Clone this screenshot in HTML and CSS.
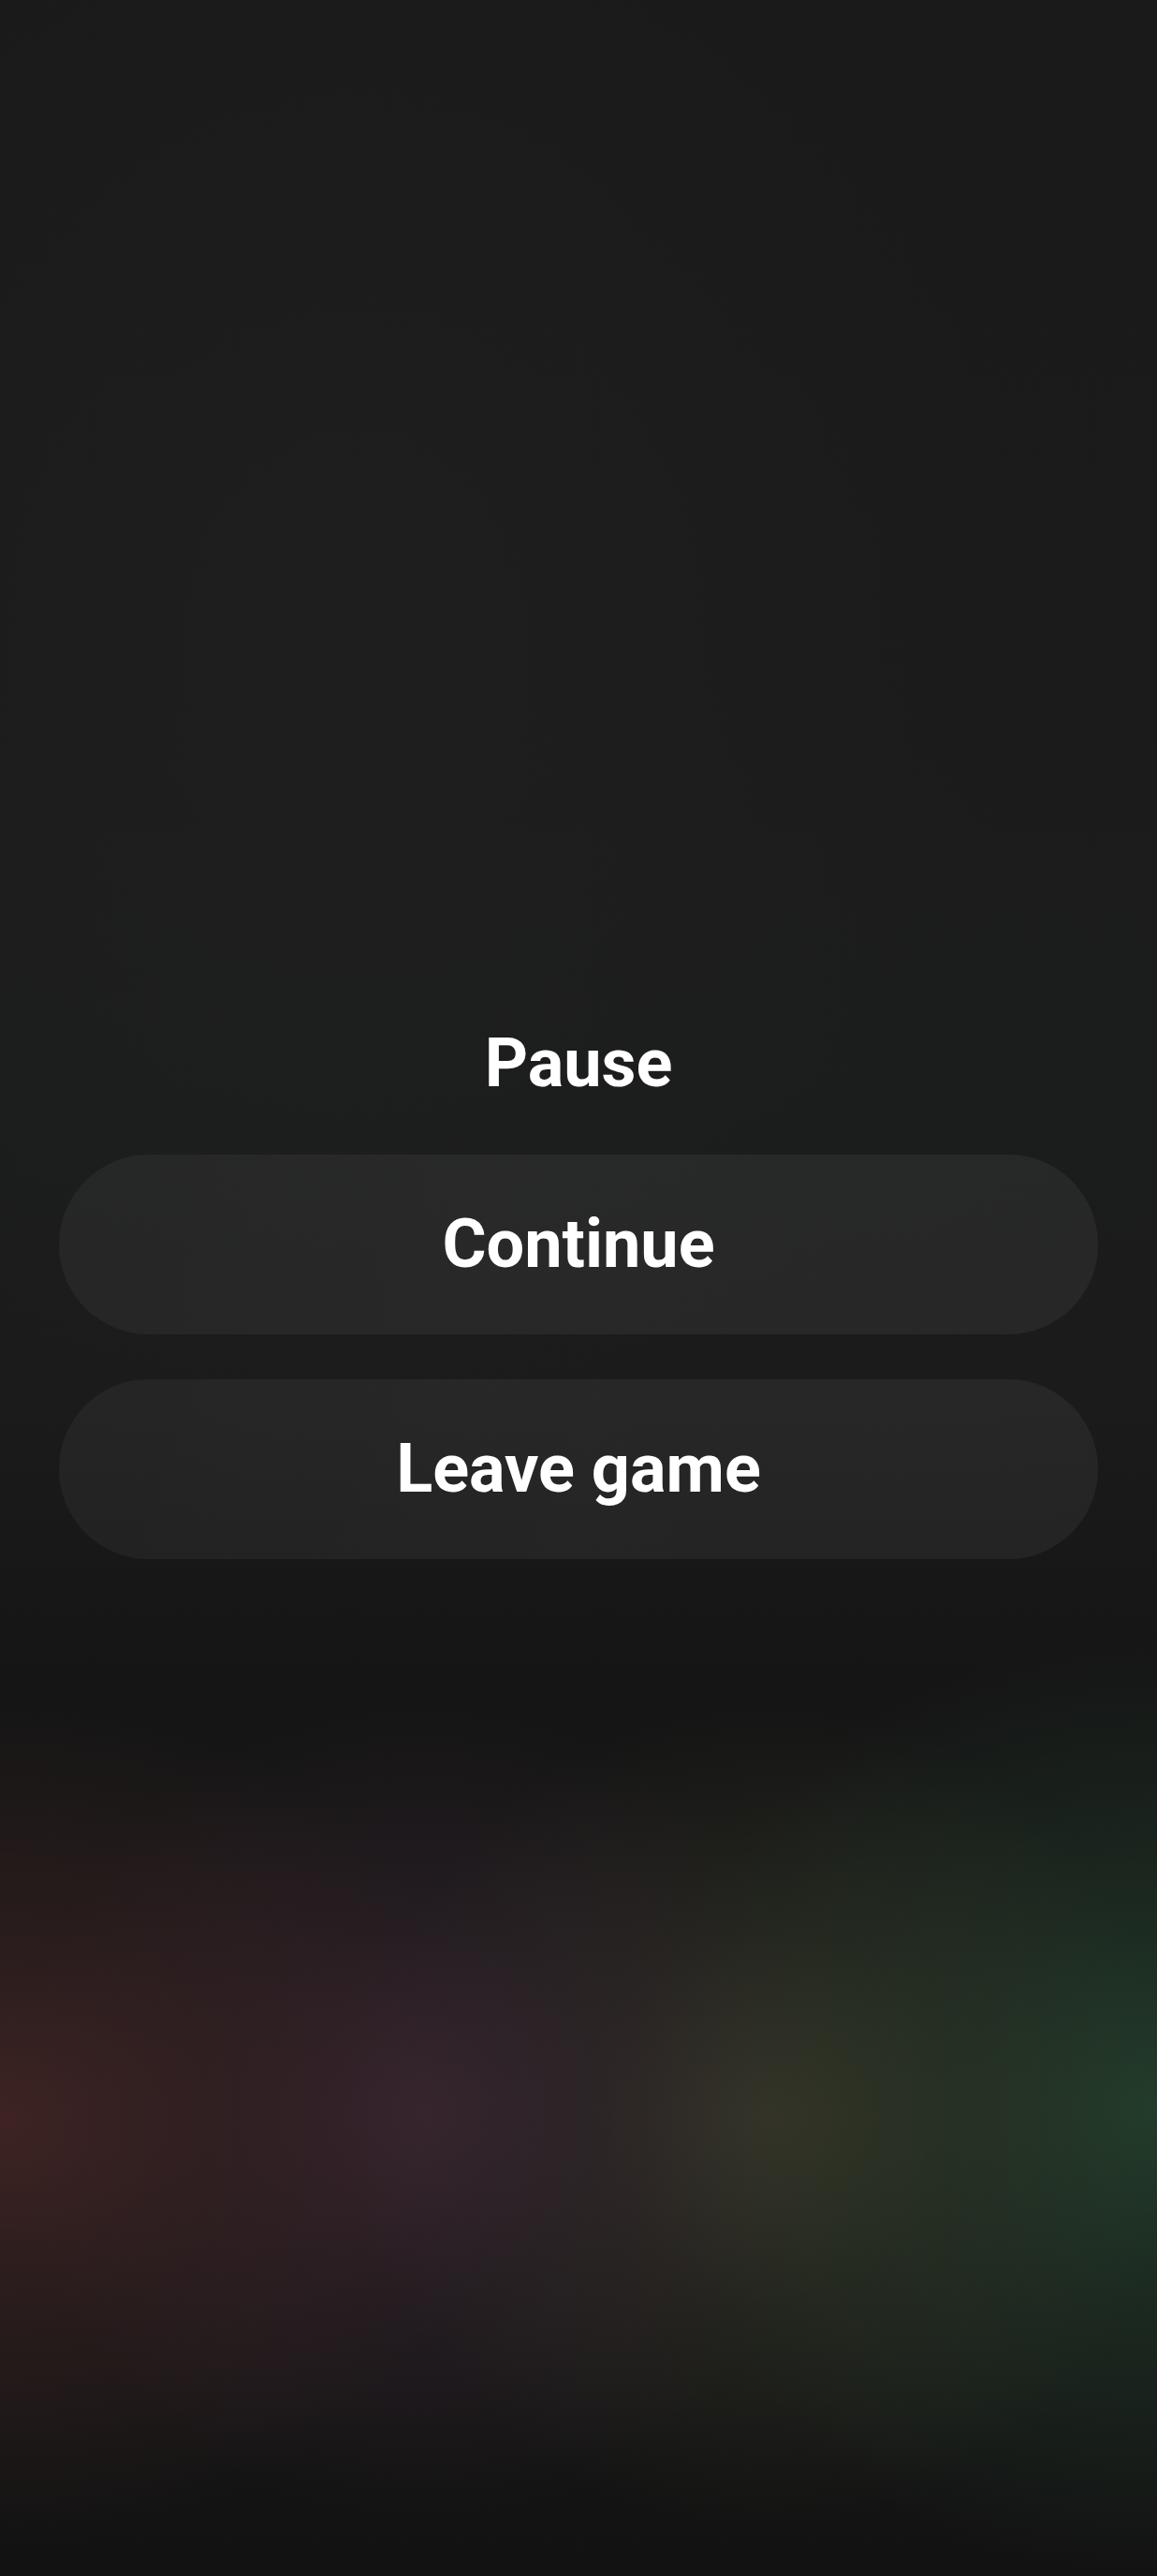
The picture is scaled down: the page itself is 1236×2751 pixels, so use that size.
FILE: index.html
```html
<!DOCTYPE html>
<html lang="en">
<head>
<meta charset="utf-8">
<title>Pause</title>
<link rel="stylesheet" href="styles.css">
</head>
<body>
<div class="screen">
  <main class="menu">
    <h1 class="title">Pause</h1>
    <div class="actions">
      <button class="btn" type="button">Continue</button>
      <button class="btn" type="button">Leave game</button>
    </div>
  </main>
</div>
</body>
</html>
```

FILE: styles.css
```css
html, body {
  margin: 0;
  padding: 0;
}

body {
  background: #151515;
  font-family: Roboto, "Noto Sans", "Liberation Sans", sans-serif;
}

.screen {
  width: 1236px;
  height: 2751px;
  box-sizing: border-box;
  background:
    radial-gradient(ellipse 540px 450px at 0px 2265px, rgba(64, 36, 36, 0.95), rgba(64, 36, 36, 0.45) 45%, rgba(64, 36, 36, 0) 100%),
    radial-gradient(ellipse 440px 440px at 450px 2255px, rgba(56, 38, 50, 0.9), rgba(56, 38, 50, 0.4) 45%, rgba(56, 38, 50, 0) 100%),
    radial-gradient(ellipse 440px 440px at 820px 2262px, rgba(54, 56, 40, 0.9), rgba(54, 56, 40, 0.4) 45%, rgba(54, 56, 40, 0) 100%),
    radial-gradient(ellipse 560px 500px at 1236px 2250px, rgba(34, 62, 44, 0.95), rgba(34, 62, 44, 0.45) 45%, rgba(34, 62, 44, 0) 100%),
    radial-gradient(ellipse 700px 900px at 380px 700px, rgba(34, 34, 34, 0.5), rgba(34, 34, 34, 0) 100%),
    linear-gradient(to bottom, #1a1a1a 0px, #1b1b1b 800px, #1b1d1c 1150px, #1a1b1a 1500px, #151515 1800px, #161616 2100px, #151515 2550px, #121212 2751px);
  padding-top: 1094px;
}

.menu {
  display: flex;
  flex-direction: column;
  align-items: stretch;
  padding: 0 63px;
}

.title {
  margin: 0 0 55px;
  font-size: 72px;
  line-height: 84px;
  font-weight: 700;
  color: #ffffff;
  text-align: center;
}

.actions {
  display: flex;
  flex-direction: column;
  gap: 48px;
}

.btn {
  height: 192px;
  border: none;
  border-radius: 96px;
  background: linear-gradient(100deg, rgba(255, 255, 255, 0.045), rgba(255, 255, 255, 0.055) 50%, rgba(255, 255, 255, 0.05));
  color: #ffffff;
  font-family: Roboto, "Noto Sans", "Liberation Sans", sans-serif;
  font-size: 72px;
  line-height: 84px;
  font-weight: 700;
  padding: 0;
  display: flex;
  align-items: center;
  justify-content: center;
}
```
